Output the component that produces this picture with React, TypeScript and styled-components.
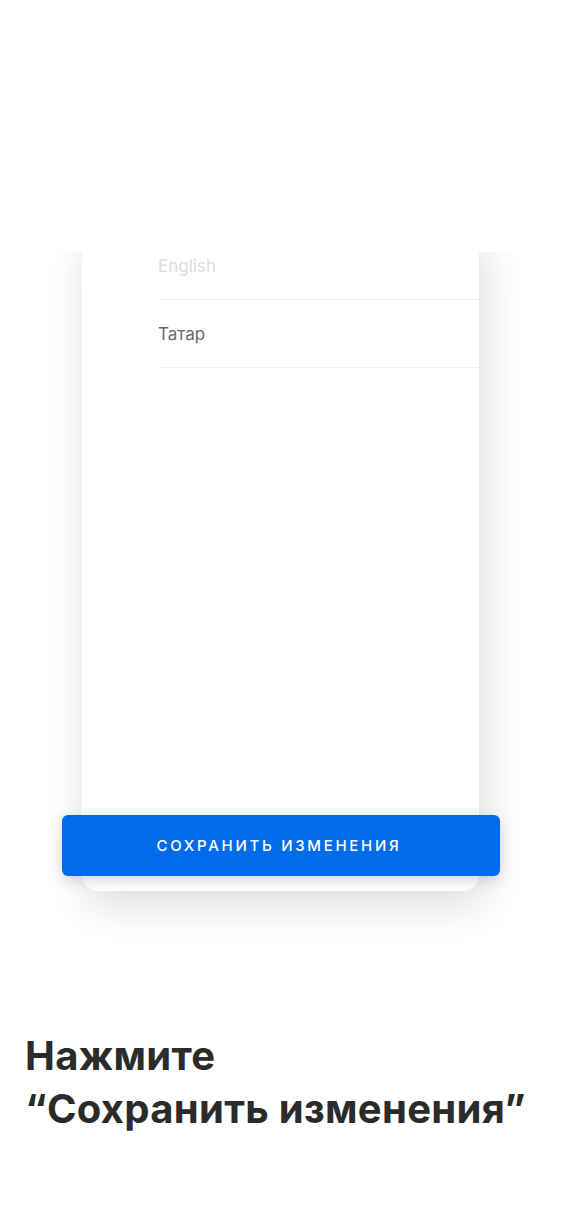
import React from "react";
import styled, { createGlobalStyle } from "styled-components";

const Global = createGlobalStyle`
  html, body { margin: 0; padding: 0; background: #ffffff; }
  body { font-family: Inter, "Noto Sans", "Liberation Sans", sans-serif; -webkit-font-smoothing: antialiased; }
`;

const Page = styled.div`
  width: 563px;
  min-height: 1219px;
  display: flex;
  flex-direction: column;
  background: #ffffff;
`;

const Spacer = styled.div<{ $h: number }>`
  height: ${(p) => p.$h}px;
  flex: none;
`;

const Stage = styled.div`
  overflow: hidden;
  padding: 0 84px 80px 82px;
`;

const Card = styled.div`
  position: relative;
  margin-top: -20px;
  height: 659px;
  background: #ffffff;
  border-radius: 0 0 16px 16px;
  box-shadow: 5px 14px 44px rgba(0, 0, 0, 0.14);
`;

const List = styled.ul`
  list-style: none;
  margin: 0;
  padding: 0 0 0 76px;
`;

const Row = styled.li<{ $muted?: boolean }>`
  height: 68px;
  display: flex;
  align-items: center;
  border-bottom: 1px solid #efefef;
  box-sizing: border-box;
  font-size: 17px;
  color: ${(p) => (p.$muted ? "#dcdcdc" : "#686868")};
`;

const SaveButton = styled.button`
  position: absolute;
  left: -20px;
  right: -21px;
  bottom: 15px;
  height: 61px;
  border: none;
  border-radius: 6px;
  background: #006ceb;
  color: #ffffff;
  font-family: Inter, "Noto Sans", "Liberation Sans", sans-serif;
  font-size: 15px;
  font-weight: 500;
  letter-spacing: 2.7px;
  padding-left: 2px;
  box-shadow: 0 4px 14px rgba(0, 0, 0, 0.16);
  cursor: pointer;
`;

const Heading = styled.h1`
  margin: 58px 0 0 25px;
  font-size: 40px;
  line-height: 53px;
  font-weight: 700;
  color: #2b2b2b;
  letter-spacing: 0.3px;
`;

export default function App() {
  return (
    <Page>
      <Global />
      <Spacer $h={252} />
      <Stage>
        <Card>
          <List>
            <Row $muted>English</Row>
            <Row>Татар</Row>
          </List>
          <SaveButton>СОХРАНИТЬ ИЗМЕНЕНИЯ</SaveButton>
        </Card>
      </Stage>
      <Heading>
        Нажмите
        <br />
        “Сохранить изменения”
      </Heading>
    </Page>
  );
}
